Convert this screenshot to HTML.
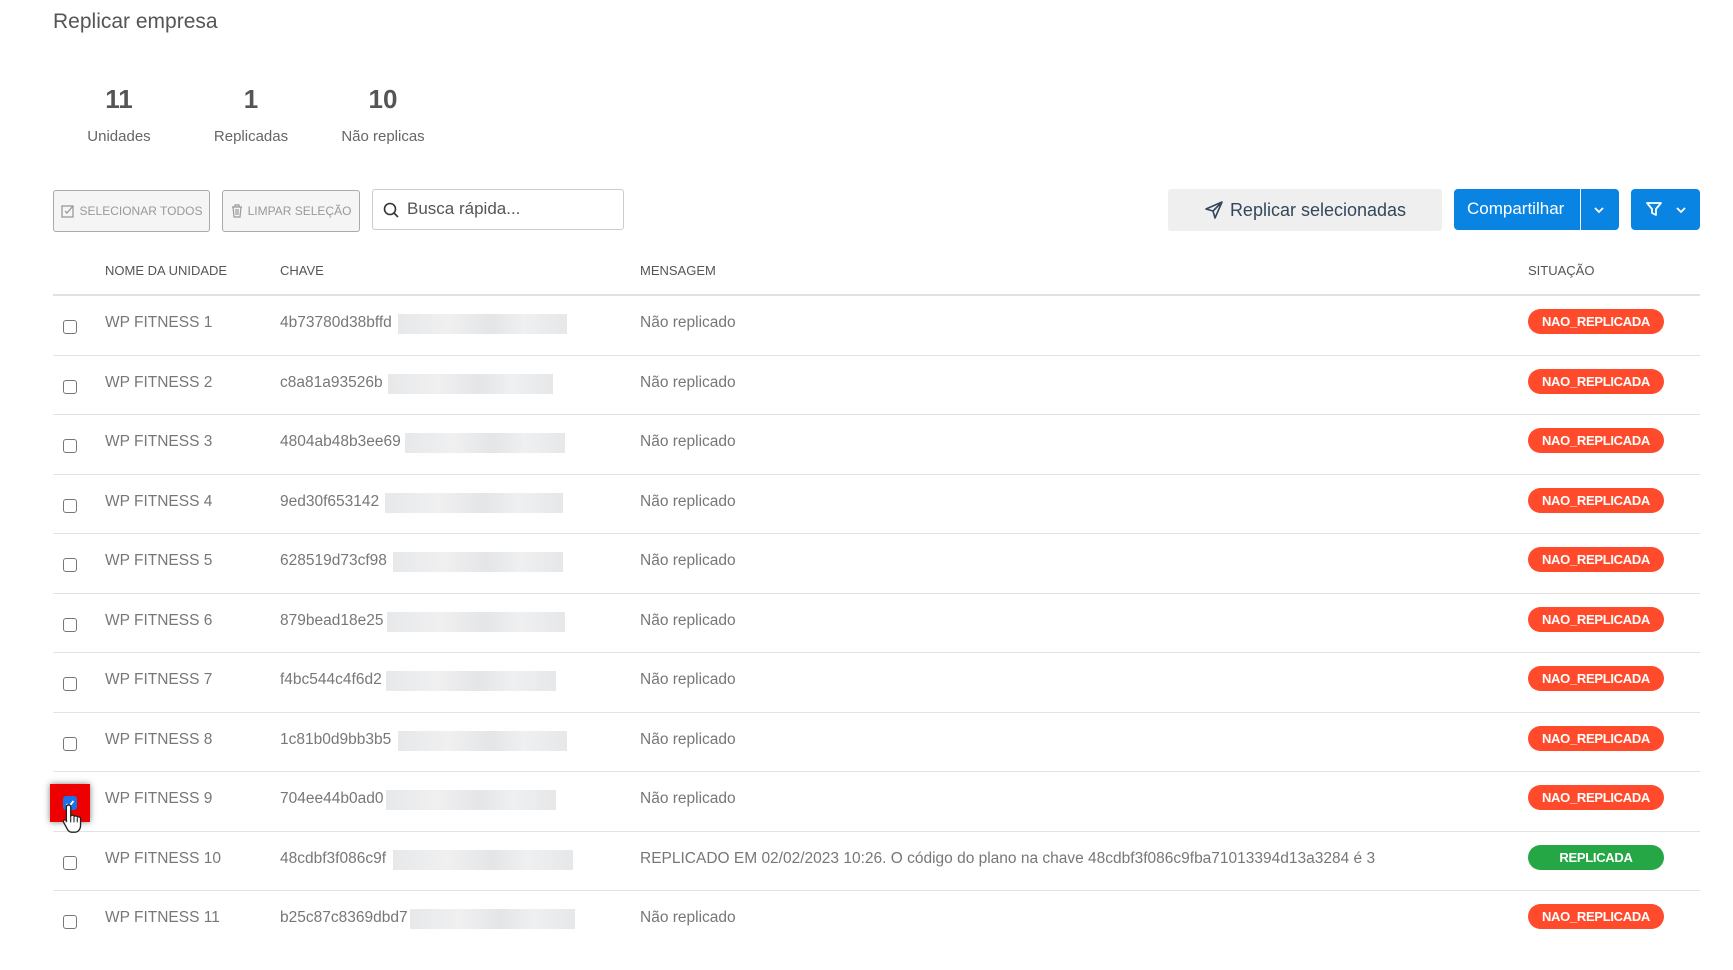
<!DOCTYPE html>
<html><head><meta charset="utf-8"><style>
*{box-sizing:border-box;margin:0;padding:0}
body{width:1733px;height:970px;background:#fff;font-family:"Liberation Sans",sans-serif;color:#666;position:relative;overflow:hidden}
.a{position:absolute;white-space:nowrap}
.num{font-size:26px;font-weight:bold;color:#555;width:120px;text-align:center}
.lbl{font-size:15px;color:#666;width:140px;text-align:center}
.btn{position:absolute;border:1px solid #aaa;border-radius:3px;background:#f5f5f5;color:#999;font-size:12px;display:flex;align-items:center;justify-content:center;gap:5px}
.th{font-size:13px;color:#555;top:263px}
.row{position:absolute;left:53px;width:1647px;height:59.5px;border-bottom:1px solid #e3e3e3}
.row span{position:absolute;top:18px;font-size:15.5px;color:#777}
.cb{position:absolute;left:10px;top:24px;width:14px;height:14px;border:1px solid #777;border-radius:3px;background:#fff}
.blur{position:absolute;top:18px;height:20px;background:linear-gradient(90deg,#e6e8ea,#f0f0f1 30%,#e4e5e7 55%,#eff0f1 75%,#e6e7e9)}
.badge{position:absolute;left:1475px;top:13px;width:136px;height:25px;border-radius:13px;background:#ff4b2b;color:#fff;font-size:13px;text-align:center;line-height:25px;font-weight:bold;letter-spacing:-.3px}
</style></head><body>
<div class="a" style="left:53px;top:10px;font-size:21px;color:#555">Replicar empresa</div>
<div class="a num" style="left:59px;top:84px">11</div>
<div class="a num" style="left:191px;top:84px">1</div>
<div class="a num" style="left:323px;top:84px">10</div>
<div class="a lbl" style="left:49px;top:128px">Unidades</div>
<div class="a lbl" style="left:181px;top:128px">Replicadas</div>
<div class="a lbl" style="left:313px;top:128px">Não replicas</div>

<div class="btn" style="left:53px;top:190px;width:157px;height:42px"><svg width="14" height="14" viewBox="0 0 14 14"><rect x="1" y="2" width="11" height="11" fill="none" stroke="#999" stroke-width="1.3"/><path d="M4 7l2 2 6-7" fill="none" stroke="#999" stroke-width="1.3"/></svg>SELECIONAR TODOS</div>
<div class="btn" style="left:222px;top:190px;width:138px;height:42px"><svg width="12" height="14" viewBox="0 0 12 14"><path d="M1 3h10M4 3V1h4v2M2 3l1 10h6l1-10M5 5v6M7 5v6" fill="none" stroke="#999" stroke-width="1.2"/></svg>LIMPAR SELEÇÃO</div>
<div class="a" style="left:372px;top:189px;width:252px;height:41px;border:1px solid #ccc;border-radius:3px;font-size:17px;color:#555;padding:9px 0 0 34px">Busca rápida...</div>
<svg class="a" style="left:383px;top:202px" width="16" height="16" viewBox="0 0 16 16"><circle cx="7" cy="7" r="5.5" fill="none" stroke="#333" stroke-width="1.6"/><path d="M11 11l4 4" stroke="#333" stroke-width="1.6"/></svg>

<div class="a" style="left:1168px;top:189px;width:274px;height:42px;background:#efefef;border-radius:3px;font-size:18px;color:#33475b;display:flex;align-items:center;justify-content:center;gap:6px"><svg width="20" height="20" viewBox="0 0 20 20"><path d="M18 2L2 9l7 2 2 7z M18 2L9 11" fill="none" stroke="#33475b" stroke-width="1.6" stroke-linejoin="round"/></svg>Replicar selecionadas</div>
<div class="a" style="left:1454px;top:189px;width:165px;height:41px;background:#0a84e3;border-radius:4px;color:#fff;font-size:17px;padding:10px 0 0 13px">Compartilhar<div style="position:absolute;left:126px;top:0;width:1px;height:41px;background:#fff"></div><svg style="position:absolute;left:139px;top:17px" width="12" height="8" viewBox="0 0 12 8"><path d="M2 2l4 4 4-4" fill="none" stroke="#fff" stroke-width="1.8"/></svg></div>
<div class="a" style="left:1631px;top:189px;width:69px;height:41px;background:#0a84e3;border-radius:4px"><svg style="position:absolute;left:15px;top:12px" width="16" height="16" viewBox="0 0 16 16"><path d="M1 2h14l-5 6v6l-4-2V8z" fill="none" stroke="#fff" stroke-width="1.8" stroke-linejoin="round"/></svg><svg style="position:absolute;left:44px;top:17px" width="12" height="8" viewBox="0 0 12 8"><path d="M2 2l4 4 4-4" fill="none" stroke="#fff" stroke-width="1.8"/></svg></div>

<div class="a th" style="left:105px">NOME DA UNIDADE</div>
<div class="a th" style="left:280px">CHAVE</div>
<div class="a th" style="left:640px">MENSAGEM</div>
<div class="a th" style="left:1528px">SITUAÇÃO</div>
<div class="a" style="left:53px;top:294px;width:1647px;height:2px;background:#dfe1e3"></div>

<div class="row" style="top:296px"><div class="cb"></div><span style="left:52px">WP FITNESS 1</span><span style="left:227px">4b73780d38bffd</span><div class="blur" style="left:345px;width:169px"></div><span style="left:587px">Não replicado</span><div class="badge">NAO_REPLICADA</div></div>
<div class="row" style="top:355.5px"><div class="cb"></div><span style="left:52px">WP FITNESS 2</span><span style="left:227px">c8a81a93526b</span><div class="blur" style="left:335px;width:165px"></div><span style="left:587px">Não replicado</span><div class="badge">NAO_REPLICADA</div></div>
<div class="row" style="top:415px"><div class="cb"></div><span style="left:52px">WP FITNESS 3</span><span style="left:227px">4804ab48b3ee69</span><div class="blur" style="left:352px;width:160px"></div><span style="left:587px">Não replicado</span><div class="badge">NAO_REPLICADA</div></div>
<div class="row" style="top:474.5px"><div class="cb"></div><span style="left:52px">WP FITNESS 4</span><span style="left:227px">9ed30f653142</span><div class="blur" style="left:332px;width:178px"></div><span style="left:587px">Não replicado</span><div class="badge">NAO_REPLICADA</div></div>
<div class="row" style="top:534px"><div class="cb"></div><span style="left:52px">WP FITNESS 5</span><span style="left:227px">628519d73cf98</span><div class="blur" style="left:340px;width:170px"></div><span style="left:587px">Não replicado</span><div class="badge">NAO_REPLICADA</div></div>
<div class="row" style="top:593.5px"><div class="cb"></div><span style="left:52px">WP FITNESS 6</span><span style="left:227px">879bead18e25</span><div class="blur" style="left:334px;width:178px"></div><span style="left:587px">Não replicado</span><div class="badge">NAO_REPLICADA</div></div>
<div class="row" style="top:653px"><div class="cb"></div><span style="left:52px">WP FITNESS 7</span><span style="left:227px">f4bc544c4f6d2</span><div class="blur" style="left:333px;width:170px"></div><span style="left:587px">Não replicado</span><div class="badge">NAO_REPLICADA</div></div>
<div class="row" style="top:712.5px"><div class="cb"></div><span style="left:52px">WP FITNESS 8</span><span style="left:227px">1c81b0d9bb3b5</span><div class="blur" style="left:345px;width:169px"></div><span style="left:587px">Não replicado</span><div class="badge">NAO_REPLICADA</div></div>
<div class="row" style="top:772px"><div style="position:absolute;left:-3px;top:12px;width:40px;height:38px;background:#e00;box-shadow:0 0 6px rgba(0,0,0,.5)"></div><div class="cb" style="left:10px;top:24px;background:#1a73e8;border-color:#1a73e8"><svg width="12" height="12" viewBox="0 0 12 12"><path d="M2.5 6l2.5 2.5 4.5-5.5" fill="none" stroke="#fff" stroke-width="1.8"/></svg></div><svg style="position:absolute;left:9px;top:30px" width="24" height="32" viewBox="0 0 22 28"><path d="M6 2c1.2 0 2 .8 2 2v8l1-.5c1-.3 2 .2 2.2 1l.8-.3c1-.3 2 .2 2.2 1l.8-.2c1-.2 2 .5 2 1.5V21c0 3-2 6-5 6H9c-2 0-3-1-4-2.5L1.5 18c-.6-1 0-2.3 1.2-2.3.7 0 1.2.4 1.6 1L4 17V4c0-1.2.8-2 2-2z" fill="#fff" stroke="#222" stroke-width="1.2"/><path d="M8 12v6M11 13v5M14 14v4" stroke="#222" stroke-width="1"/></svg><span style="left:52px">WP FITNESS 9</span><span style="left:227px">704ee44b0ad0</span><div class="blur" style="left:333px;width:170px"></div><span style="left:587px">Não replicado</span><div class="badge">NAO_REPLICADA</div></div>
<div class="row" style="top:831.5px"><div class="cb"></div><span style="left:52px">WP FITNESS 10</span><span style="left:227px">48cdbf3f086c9f</span><div class="blur" style="left:340px;width:180px"></div><span style="left:587px">REPLICADO EM 02/02/2023 10:26. O código do plano na chave 48cdbf3f086c9fba71013394d13a3284 é 3</span><div class="badge" style="background:#25a745">REPLICADA</div></div>
<div class="row" style="top:891px;border-bottom:none"><div class="cb"></div><span style="left:52px">WP FITNESS 11</span><span style="left:227px">b25c87c8369dbd7</span><div class="blur" style="left:357px;width:165px"></div><span style="left:587px">Não replicado</span><div class="badge">NAO_REPLICADA</div></div>
</body></html>
